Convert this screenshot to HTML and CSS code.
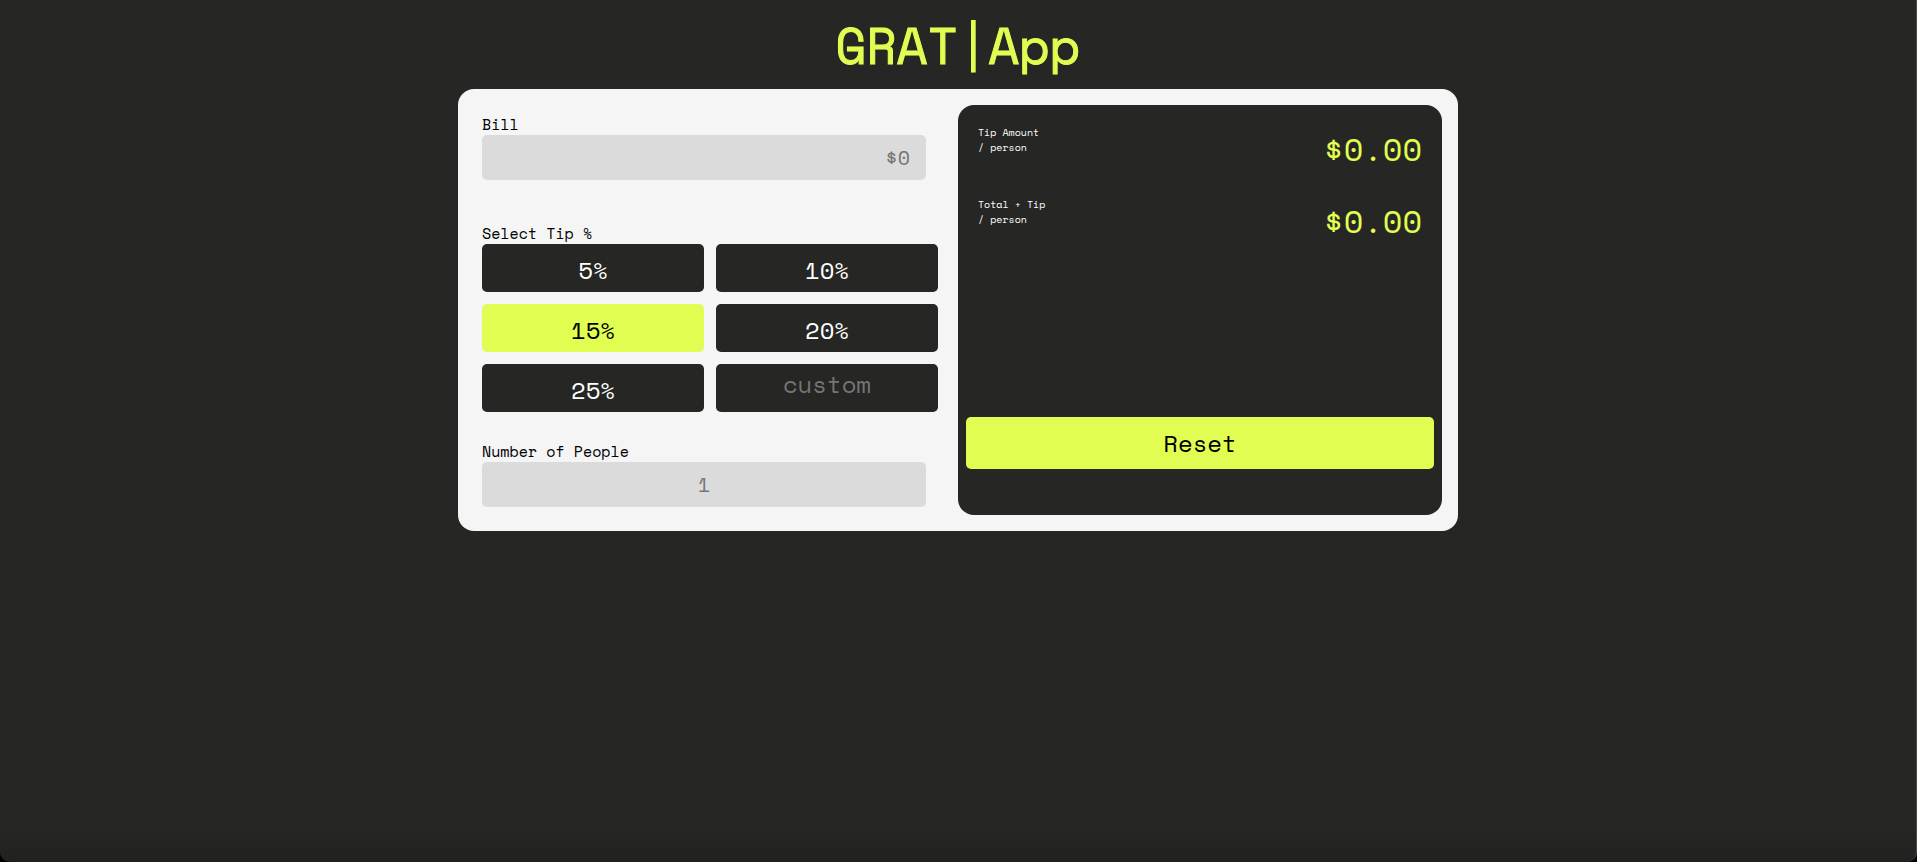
FILE: index.html
```html
<!DOCTYPE html>
<html lang="en">
<head>
<meta charset="utf-8">
<meta name="viewport" content="width=device-width, initial-scale=1">
<title>GRAT|App</title>
<link rel="stylesheet" href="styles.css">
</head>
<body>
<h1 class="title">GRAT|App</h1>
<main class="card">
  <form class="entry">
    <div class="field">
      <label class="label" for="bill">Bill</label>
      <input class="input input-bill" id="bill" type="text" inputmode="decimal" placeholder="$0">
    </div>
    <fieldset class="tips">
      <legend class="label">Select Tip %</legend>
      <div class="tip-grid">
        <button class="tip" type="button">5%</button>
        <button class="tip" type="button">10%</button>
        <button class="tip tip-active" type="button" aria-pressed="true">15%</button>
        <button class="tip" type="button">20%</button>
        <button class="tip" type="button">25%</button>
        <input class="tip tip-custom" type="text" inputmode="decimal" placeholder="custom" aria-label="Custom tip percentage">
      </div>
    </fieldset>
    <div class="field">
      <label class="label" for="people">Number of People</label>
      <input class="input input-people" id="people" type="text" inputmode="numeric" placeholder="1">
    </div>
  </form>
  <section class="panel">
    <div class="results">
      <div class="result">
        <p class="result-name">Tip Amount<br>/ person</p>
        <output class="amount">$0.00</output>
      </div>
      <div class="result">
        <p class="result-name">Total + Tip<br>/ person</p>
        <output class="amount">$0.00</output>
      </div>
    </div>
    <button class="reset" type="button">Reset</button>
  </section>
</main>
</body>
</html>
```
FILE: styles.css
```css
* {
  box-sizing: border-box;
}

:root {
  --dark: #262624;
  --lime: #e2fd52;
  --light: #f5f5f5;
  --mono: "Space Mono", "DejaVu Sans Mono", monospace;
}

html {
  background: #000;
}

body {
  margin: 0;
  min-height: 100vh;
  border-right: 1px solid #4a4a4a;
  border-radius: 0 0 10px 10px;
  background: linear-gradient(to top, #212120, var(--dark) 32px);
  font-family: var(--mono);
}

button,
input {
  border: 0;
  font-family: inherit;
}

.title {
  margin: 0;
  padding: 8px 0 7px;
  color: var(--lime);
  font-size: 50px;
  font-weight: 400;
  line-height: 74px;
  text-align: center;
  -webkit-text-stroke: 1px var(--lime);
}

.card {
  display: grid;
  grid-template-columns: 1fr 1fr;
  max-width: 1000px;
  margin: 0 auto;
  padding: 16px;
  border-radius: 16px;
  background: var(--light);
}

.entry {
  display: flex;
  flex-direction: column;
  padding: 8px 20px 8px 8px;
}

.field {
  display: flex;
  flex-direction: column;
  margin-right: 12px;
}

.label {
  padding: 0;
  color: #000;
  font-size: 15px;
  line-height: 22px;
}

.input {
  width: 100%;
  height: 45px;
  padding: 0 16px;
  border-radius: 5px;
  background: #dbdbdb;
  font-size: 20px;
}

.input::placeholder,
.tip-custom::placeholder {
  color: #757575;
  opacity: 1;
}

.input-bill {
  text-align: right;
}

.input-people {
  text-align: center;
}

.tips {
  min-width: 0;
  margin: 42px 0 28px;
  padding: 0;
  border: 0;
}

.tip-grid {
  display: grid;
  grid-template-columns: 1fr 1fr;
  gap: 12px;
}

.tip {
  min-width: 0;
  height: 48px;
  padding: 4px 0 0;
  border-radius: 5px;
  background: var(--dark);
  color: #fff;
  font-size: 24px;
  font-weight: 400;
  text-align: center;
}

.tip-active {
  background: var(--lime);
  color: #000;
}

.tip-custom {
  padding: 0 0 8px;
}

.panel {
  display: flex;
  flex-direction: column;
  justify-content: space-between;
  padding: 16px 8px 46px;
  border-radius: 16px;
  background: var(--dark);
}

.results {
  display: flex;
  flex-direction: column;
  gap: 22px;
  padding: 0 12px;
}

.result {
  display: flex;
  justify-content: space-between;
}

.result-name {
  margin: 4px 0 0;
  color: #fff;
  font-size: 10px;
  line-height: 15px;
}

.amount {
  padding-top: 7px;
  color: var(--lime);
  font-size: 32px;
  line-height: 43px;
}

.reset {
  height: 52px;
  border-radius: 5px;
  background: var(--lime);
  color: #000;
  font-size: 24px;
}

@media (max-width: 700px) {
  .card {
    grid-template-columns: 1fr;
  }
}
```
